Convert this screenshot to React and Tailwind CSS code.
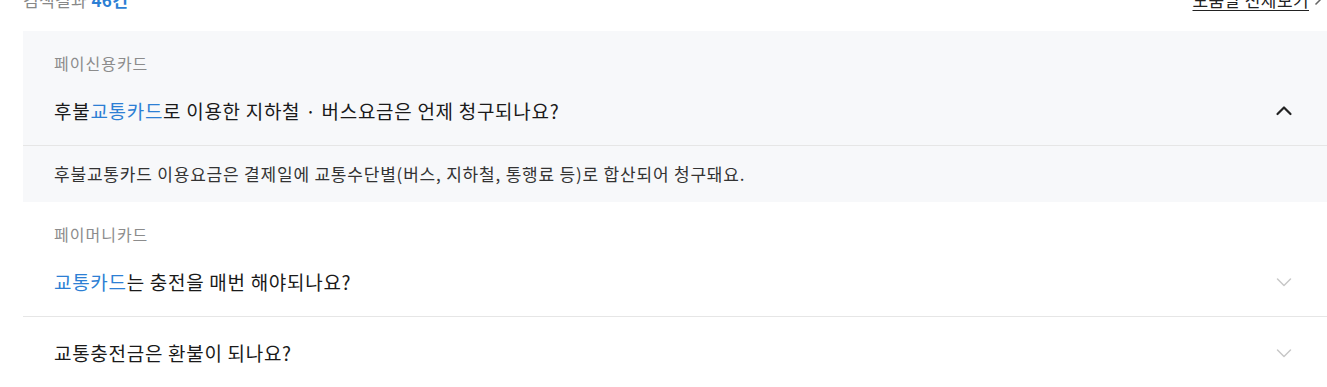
import React from 'react';

const font = { fontFamily: '"Noto Sans CJK KR", "Noto Sans", sans-serif' };

const faqs = [
  {
    category: '페이신용카드',
    before: '후불',
    highlight: '교통카드',
    after: '로 이용한 지하철 · 버스요금은 언제 청구되나요?',
    answer: '후불교통카드 이용요금은 결제일에 교통수단별(버스, 지하철, 통행료 등)로 합산되어 청구돼요.',
    open: true,
  },
  {
    category: '페이머니카드',
    before: '',
    highlight: '교통카드',
    after: '는 충전을 매번 해야되나요?',
  },
  {
    before: '교통충전금은 환불이 되나요?',
    highlight: '',
    after: '',
  },
];

const ChevronUp = () => (
  <svg width="18" height="18" viewBox="0 0 18 18" fill="none">
    <path d="M2.5 12 L9 5.5 L15.5 12" stroke="#222" strokeWidth="2.2" strokeLinecap="round" strokeLinejoin="round" />
  </svg>
);

const ChevronDown = () => (
  <svg width="18" height="18" viewBox="0 0 18 18" fill="none">
    <path d="M2.5 6 L9 12.5 L15.5 6" stroke="#c8c8c8" strokeWidth="1.5" strokeLinecap="round" strokeLinejoin="round" />
  </svg>
);

const FaqItem = ({ item }) => (
  <div className={item.open ? 'bg-[#f7f8fa]' : 'bg-white border-b border-[#e6e6e6]'}>
    <div className={item.open ? 'border-b border-[#e6e6e6]' : ''}>
      {item.category && (
        <div className="pl-[31px] pt-[22px] text-[16px] leading-[20px] tracking-[1px] text-[#8c8c8c]">
          {item.category}
        </div>
      )}
      <div
        className={`flex items-center justify-between pl-[31px] pr-[34px] ${
          item.category ? 'pt-[24px] pb-[20px]' : 'py-[22px]'
        }`}
      >
        <span className="text-[19px] leading-[28px] tracking-[0.7px] text-[#1a1a1a]">
          {item.before}
          {item.highlight && <span className="text-[#2d7fd4]">{item.highlight}</span>}
          {item.after}
        </span>
        {item.open ? <ChevronUp /> : <ChevronDown />}
      </div>
    </div>
    {item.open && (
      <div className="pl-[31px] py-[18px] text-[17px] leading-[20px] tracking-[0.8px] text-[#333]">
        {item.answer}
      </div>
    )}
  </div>
);

export default function App() {
  return (
    <div className="w-[1327px] h-[387px] overflow-hidden bg-white" style={font}>
      <div className="-mt-[12px] pl-[23px] pb-[19px] flex items-center justify-between pr-[5px]">
        <span className="text-[17px] leading-[24px] tracking-[0.4px] text-[#888]">
          검색결과 <span className="text-[#2d7fd4] font-bold">46건</span>
        </span>
        <span className="flex items-center gap-[5px] text-[17px] leading-[24px] tracking-[0.4px] text-[#222]">
          <span className="underline underline-offset-[3px]">도움말 전체보기</span>
          <svg width="8" height="12" viewBox="0 0 8 12" fill="none">
            <path d="M1.5 1.5 L6 6 L1.5 10.5" stroke="#666" strokeWidth="1.5" />
          </svg>
        </span>
      </div>
      <div className="ml-[23px]">
        {faqs.map((f, i) => (
          <FaqItem key={i} item={f} />
        ))}
      </div>
    </div>
  );
}
